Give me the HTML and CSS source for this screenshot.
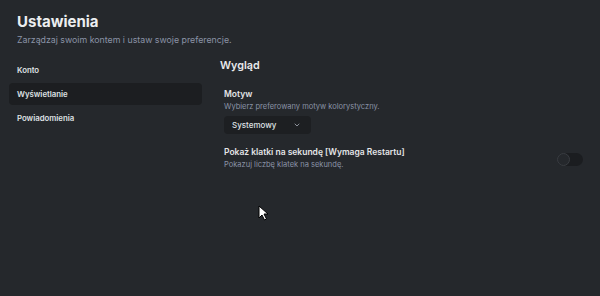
FILE: index.html
```html
<!DOCTYPE html>
<html lang="pl">
<head>
    <meta charset="UTF-8">
    <meta name="viewport" content="width=device-width, initial-scale=1.0">
    <title>Ustawienia</title>
    <link rel="stylesheet" href="styles.css">
</head>
<body>
    <div class="settings">
        <header class="settings-header">
            <h1>Ustawienia</h1>
            <p>Zarządzaj swoim kontem i ustaw swoje preferencje.</p>
        </header>

        <div class="settings-body">
            <nav class="sidebar">
                <a class="nav-item">Konto</a>
                <a class="nav-item active">Wyświetlanie</a>
                <a class="nav-item">Powiadomienia</a>
            </nav>

            <main class="content">
                <h2>Wygląd</h2>

                <div class="option">
                    <div class="option-title">Motyw</div>
                    <div class="option-desc">Wybierz preferowany motyw kolorystyczny.</div>
                    <button class="select">
                        <span>Systemowy</span>
                        <svg width="8" height="8" viewBox="0 0 8 8" fill="none" stroke="#8a8f98" stroke-width="1" stroke-linecap="round" stroke-linejoin="round"><path d="M2 3 L4 5 L6 3"/></svg>
                    </button>
                </div>

                <div class="option option-row">
                    <div>
                        <div class="option-title">Pokaż klatki na sekundę [Wymaga Restartu]</div>
                        <div class="option-desc">Pokazuj liczbę klatek na sekundę.</div>
                    </div>
                    <span class="toggle"><span class="thumb"></span></span>
                </div>
            </main>
        </div>
    </div>

    <!-- kursor myszy -->
    <svg class="cursor" width="12" height="17" viewBox="0 0 12 17">
        <path d="M1 1 L1 13 L4 10 L6.5 15 L8.5 14 L6 9 L10 9 Z" fill="#fff" stroke="#000" stroke-width="1"/>
    </svg>
</body>
</html>
```

FILE: styles.css
```css
body {
    margin: 0;
    height: 296px;
    background-color: #25282c;
    font-family: 'Inter', 'Noto Sans', sans-serif;
    color: #e4e5e7;
    overflow: hidden;
}

.settings {
    padding: 12px 0 0 9px;
}

.settings-header {
    padding-left: 8px;
}

.settings-header h1 {
    margin: 0;
    font-size: 15px;
    font-weight: 700;
    line-height: 20px;
    color: #eceef0;
}

.settings-header p {
    margin: 1px 0 0;
    font-size: 8.8px;
    line-height: 13px;
    color: #8a93a6;
}

.settings-body {
    display: flex;
    gap: 18px;
    margin-top: 13px;
}

.sidebar {
    width: 193px;
    display: flex;
    flex-direction: column;
    gap: 2px;
}

.nav-item {
    height: 22px;
    line-height: 22px;
    padding-left: 8px;
    font-size: 7.8px;
    font-weight: 600;
    color: #dfe1e4;
    border-radius: 4px;
}

.nav-item.active {
    background-color: #1c1e21;
}

.content {
    flex: 1;
    padding-right: 17px;
}

.content h2 {
    margin: -2px 0 0;
    font-size: 10.8px;
    font-weight: 600;
    line-height: 18px;
    color: #e8e9eb;
}

.option {
    padding-left: 4px;
    margin-top: 13px;
}

.option + .option {
    margin-top: 12px;
}

.option-row {
    display: flex;
    justify-content: space-between;
    align-items: center;
}

.option-title {
    font-size: 8.5px;
    font-weight: 600;
    line-height: 13px;
    color: #e4e5e7;
}

.option-desc {
    font-size: 7.5px;
    line-height: 11px;
    color: #8a93a6;
}

.select {
    display: flex;
    align-items: center;
    justify-content: space-between;
    width: 87px;
    height: 18px;
    margin-top: 4px;
    padding: 0 10px 0 8px;
    border: none;
    border-radius: 4px;
    background-color: #1d1f22;
    font-family: inherit;
    font-size: 8px;
    font-weight: 500;
    color: #dfe1e4;
}

.toggle {
    position: relative;
    width: 26px;
    height: 13px;
    margin-top: 2px;
    border-radius: 7px;
    background-color: #1b1d20;
}

.thumb {
    position: absolute;
    left: 0;
    top: 0;
    width: 11px;
    height: 11px;
    border-radius: 50%;
    border: 1px solid #3a3d42;
    background-color: #25282c;
}

.cursor {
    position: absolute;
    left: 258px;
    top: 205px;
}
```
